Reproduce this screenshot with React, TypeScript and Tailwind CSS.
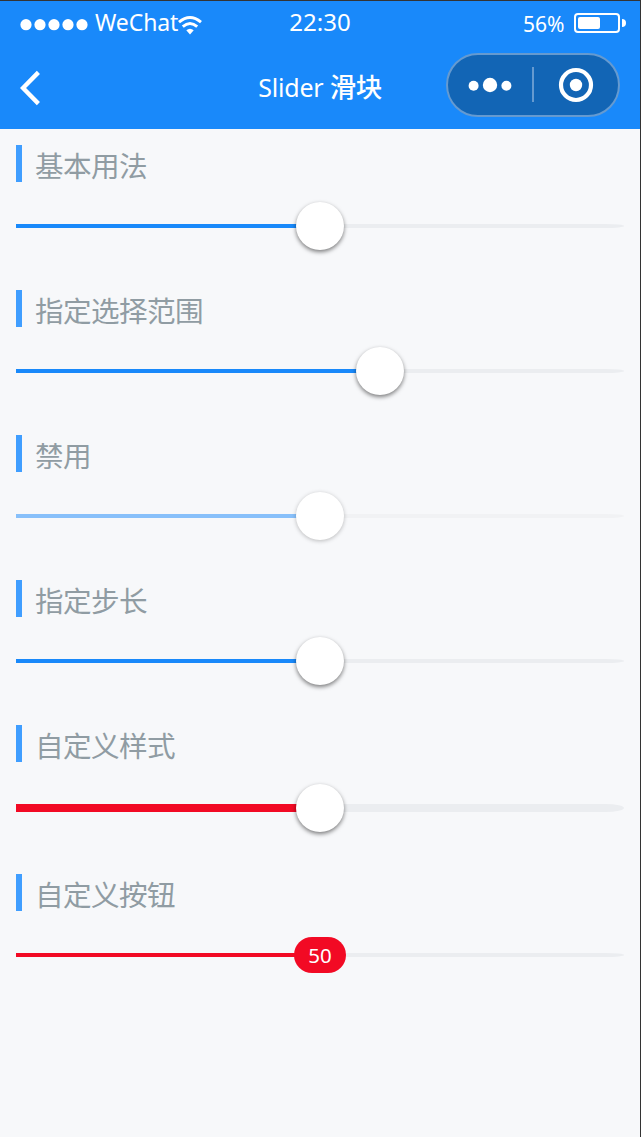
import React from "react";

type SliderProps = {
  title: string;
  fill: string;
  bar?: string;
  value: string;
  section?: string;
  rail?: string;
  disabled?: boolean;
  badge?: string;
};

const LATIN = "font-['Noto_Sans','Noto_Sans_CJK_SC',sans-serif]";

function SliderSection({
  title,
  fill,
  value,
  bar = "h-1",
  section = "h-[145px]",
  rail = "h-12 mt-5",
  disabled = false,
  badge,
}: SliderProps) {
  return (
    <section className={`px-4 ${section}`}>
      <h2 className="flex h-[37px] items-center border-l-[6px] border-[#409eff] pl-[13px] font-['Noto_Sans_CJK_SC',sans-serif] text-[28.6px] leading-[37px] font-normal tracking-[-0.6px] text-[#909ca3]">
        <span className="relative top-px whitespace-nowrap">{title}</span>
      </h2>
      <div className={`relative flex w-[608px] items-center ${rail}`}>
        <div className={`w-full rounded-r-[3%_50%] ${bar} ${disabled ? "bg-[#f1f2f4]" : "bg-[#ebedf0]"}`}>
          <div className={`h-full ${value} ${fill}`} />
        </div>
        {badge ? (
          <div className="absolute left-[278px] flex h-9 w-[52px] items-center justify-center rounded-full bg-[#f20a24] font-['Noto_Sans',sans-serif] text-[20.5px] leading-9 text-white">
            <span>{badge}</span>
          </div>
        ) : (
          <div className={`absolute top-0 flex h-12 ${value} justify-end`}>
            <div
              className={`-mr-6 size-12 shrink-0 rounded-full bg-white ${
                disabled ? "shadow-[0_1px_4px_rgba(0,0,0,0.25)]" : "shadow-[0_2px_4px_rgba(0,0,0,0.5)]"
              }`}
            />
          </div>
        )}
      </div>
    </section>
  );
}

function Header() {
  return (
    <header className="flex h-32 flex-col bg-[#1989fa] text-white">
      <div className="grid h-12 grid-cols-3">
        <div className="flex items-start pl-5">
          <svg className="mt-[18px] h-3 w-[69px] shrink-0" viewBox="0 0 69 12" fill="currentColor">
            <circle cx="6" cy="5.7" r="5.6" />
            <circle cx="20" cy="5.7" r="5.6" />
            <circle cx="34" cy="5.7" r="5.6" />
            <circle cx="48" cy="5.7" r="5.6" />
            <circle cx="62" cy="5.7" r="5.6" />
          </svg>
          <span className="mt-[5px] ml-[6px] w-[83px] text-[23px] leading-8 tracking-[-0.1px] whitespace-nowrap">WeChat</span>
          <svg className="mt-[14px] h-5 w-6 shrink-0" viewBox="0 0 24 20" fill="none" stroke="currentColor" strokeWidth="2.9">
            <path d="M1 7.2 Q12 -2.2 23 7.2" />
            <path d="M4.8 11.6 Q12 5.2 19.2 11.6" />
            <path d="M8.3 15.3 Q12 12 15.7 15.3 L12 19.6 Z" fill="currentColor" stroke="none" />
          </svg>
        </div>
        <div className="pt-[5px] text-center text-[24px] leading-8">22:30</div>
        <div className="flex items-start justify-end pr-[14px]">
          <span className="mt-[7px] mr-[9.5px] text-[21px] leading-8 whitespace-nowrap">56%</span>
          <div className="mt-3 h-5 w-[46px] rounded border-2 border-white p-[2px]">
            <div className="h-3 w-[22px] rounded-[2px] bg-white" />
          </div>
          <div className="mt-[18px] ml-[2px] h-2 w-1 rounded-r-full bg-white" />
        </div>
      </div>
      <div className="grid h-20 grid-cols-3">
        <svg className="mt-[21px] ml-5 h-[38px] w-5" viewBox="0 0 20 38" fill="none" stroke="currentColor" strokeWidth="4.4">
          <path d="M18.4 2.4 L3 18 L18.4 33.6" />
        </svg>
        <h1 className="pt-[22px] text-center text-[25px] leading-8 font-normal tracking-[-0.2px] whitespace-nowrap">
          Slider <span className="text-[26.5px] font-medium tracking-[-0.5px]">滑块</span>
        </h1>
        <div className="flex justify-end pr-5">
          <div className="mt-1 flex h-16 w-[174px] shrink-0 rounded-full border-2 border-[#659ad0] bg-[#1265b5]">
            <svg className="h-[60px] w-[170px]" viewBox="0 0 170 60" fill="currentColor">
              <circle cx="25.6" cy="30.8" r="5" />
              <circle cx="42" cy="30" r="7.2" />
              <circle cx="58.4" cy="30.8" r="5" />
              <rect x="84" y="12" width="2" height="35" fill="#659ad0" />
              <circle cx="128" cy="30" r="15" fill="none" stroke="currentColor" strokeWidth="4.2" />
              <circle cx="128" cy="30" r="6.2" />
            </svg>
          </div>
        </div>
      </div>
    </header>
  );
}

export default function App() {
  return (
    <div className={`h-[1137px] w-[641px] overflow-hidden border-t border-r border-[#333333] bg-[#f7f8fa] ${LATIN}`}>
      <Header />
      <main className="pt-4">
        <SliderSection title="基本用法" fill="bg-[#1989fa]" value="w-[304px]" />
        <SliderSection title="指定选择范围" fill="bg-[#1989fa]" value="w-[364px]" />
        <SliderSection title="禁用" fill="bg-[#88c0fa]" value="w-[304px]" disabled />
        <SliderSection title="指定步长" fill="bg-[#1989fa]" value="w-[304px]" />
        <SliderSection title="自定义样式" fill="bg-[#f20a24]" value="w-[304px]" bar="h-2" section="h-[149px]" rail="h-12 mt-[22px]" />
        <SliderSection title="自定义按钮" fill="bg-[#f20a24]" value="w-[304px]" badge="50" />
      </main>
    </div>
  );
}
